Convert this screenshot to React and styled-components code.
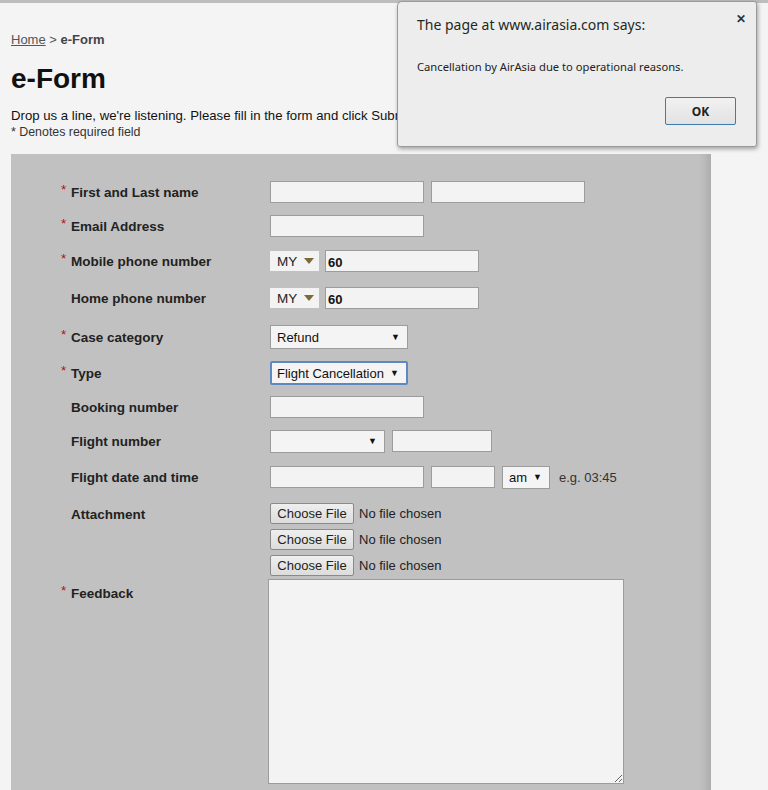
import React from "react";
import styled, { createGlobalStyle } from "styled-components";

const Global = createGlobalStyle`
  html, body {
    margin: 0;
    padding: 0;
    background: #f4f4f4;
    font-family: "Liberation Sans", Arial, sans-serif;
  }
`;

export default function App() {
  return (
    <>
      <Global />
      <Page>
        <TopStrip />
        <Content>
          <Crumbs>
            <a href="#home">Home</a> &gt; <b>e-Form</b>
          </Crumbs>
          <Title>e-Form</Title>
          <Intro>
            Drop us a line, we're listening. Please fill in the form and click
            Submit.
          </Intro>
          <Note>* Denotes required field</Note>
          <Panel>
            <Row h={34}>
              <Label required>First and Last name</Label>
              <Controls>
                <TextInput w={154} />
                <TextInput w={154} />
              </Controls>
            </Row>
            <Row h={34}>
              <Label required>Email Address</Label>
              <Controls>
                <TextInput w={154} />
              </Controls>
            </Row>
            <Row h={36}>
              <Label required>Mobile phone number</Label>
              <Controls>
                <Country>
                  MY <Tri />
                </Country>
                <TextInput w={154} bold defaultValue="60" />
              </Controls>
            </Row>
            <Row h={38}>
              <Label>Home phone number</Label>
              <Controls>
                <Country>
                  MY <Tri />
                </Country>
                <TextInput w={154} bold defaultValue="60" />
              </Controls>
            </Row>
            <Row h={40}>
              <Label required>Case category</Label>
              <Controls>
                <Select w={138}>
                  Refund <Arrow>▼</Arrow>
                </Select>
              </Controls>
            </Row>
            <Row h={32}>
              <Label required>Type</Label>
              <Controls>
                <Select w={138} focused>
                  Flight Cancellation <Arrow>▼</Arrow>
                </Select>
              </Controls>
            </Row>
            <Row h={36}>
              <Label>Booking number</Label>
              <Controls>
                <TextInput w={154} />
              </Controls>
            </Row>
            <Row h={32}>
              <Label>Flight number</Label>
              <Controls>
                <Select w={115} h={23}>
                  <Arrow>▼</Arrow>
                </Select>
                <TextInput w={100} />
              </Controls>
            </Row>
            <Row h={40}>
              <Label>Flight date and time</Label>
              <Controls>
                <TextInput w={154} />
                <TextInput w={64} />
                <Select w={48} h={23}>
                  am <Arrow>▼</Arrow>
                </Select>
                <Hint>e.g. 03:45</Hint>
              </Controls>
            </Row>
            <TopRow>
              <Label top={4}>Attachment</Label>
              <Files>
                {[0, 1, 2].map((i) => (
                  <FileLine key={i}>
                    <FileButton type="button">Choose File</FileButton>
                    <span>No file chosen</span>
                  </FileLine>
                ))}
              </Files>
            </TopRow>
            <FeedbackRow>
              <Label required top={7}>
                Feedback
              </Label>
              <Feedback />
            </FeedbackRow>
          </Panel>
        </Content>

        <Dialog>
          <Close>✕</Close>
          <DialogTitle>The page at www.airasia.com says:</DialogTitle>
          <DialogText>Cancellation by AirAsia due to operational reasons.</DialogText>
          <DialogActions>
            <OkButton type="button">OK</OkButton>
          </DialogActions>
        </Dialog>
      </Page>
    </>
  );
}

function Label({ required, top, children }) {
  return (
    <LabelText top={top}>
      <Star show={required}>*</Star>
      {children}
    </LabelText>
  );
}

const Page = styled.div`
  position: relative;
  min-height: 790px;
  overflow: hidden;
`;

const TopStrip = styled.div`
  height: 3px;
  background: #bdbdbd;
`;

const Content = styled.div`
  padding: 29px 0 0 11px;
`;

const Crumbs = styled.div`
  font-size: 13px;
  color: #555;
  a {
    color: #555;
    text-decoration: underline;
  }
  b {
    color: #444;
  }
`;

const Title = styled.h1`
  margin: 13px 0 0;
  font-size: 28px;
  font-weight: bold;
  color: #111;
  line-height: 38px;
`;

const Intro = styled.div`
  margin-top: 10px;
  font-size: 13.2px;
  color: #111;
  white-space: nowrap;
  line-height: 16px;
`;

const Note = styled.div`
  font-size: 12.4px;
  color: #333;
  line-height: 16px;
`;

const Panel = styled.div`
  margin-top: 14px;
  width: 700px;
  min-height: 640px;
  padding: 21px 0 0 50px;
  box-sizing: border-box;
  background: #c1c1c1;
  box-shadow: inset -12px 0 10px -8px rgba(0, 0, 0, 0.12);
`;

const Row = styled.div`
  display: grid;
  grid-template-columns: 209px 1fr;
  align-items: center;
  height: ${(p) => p.h}px;
`;

const TopRow = styled.div`
  display: grid;
  grid-template-columns: 209px 1fr;
  align-items: start;
  padding-top: 6px;
`;

const FeedbackRow = styled(TopRow)`
  grid-template-columns: 207px 1fr;
  padding-top: 3px;
`;

const LabelText = styled.div`
  font-size: 13.5px;
  font-weight: bold;
  color: #222;
  white-space: nowrap;
  padding-top: ${(p) => p.top || 0}px;
`;

const Star = styled.span`
  display: inline-block;
  width: 10px;
  color: #b21010;
  font-weight: normal;
  position: relative;
  top: -3px;
  visibility: ${(p) => (p.show ? "visible" : "hidden")};
`;

const Controls = styled.div`
  display: flex;
  align-items: center;
  gap: 7px;
`;

const TextInput = styled.input`
  width: ${(p) => p.w}px;
  height: 22px;
  box-sizing: border-box;
  border: 1px solid #9c9c9c;
  background: #f3f3f3;
  font-family: "Liberation Sans", Arial, sans-serif;
  font-size: 13px;
  font-weight: ${(p) => (p.bold ? "bold" : "normal")};
  color: #111;
  padding: 2px 2px 0;
  margin: 0;
  outline: none;
`;

const Country = styled.div`
  width: 49px;
  height: 20px;
  box-sizing: border-box;
  background: #f3f3f3;
  display: flex;
  align-items: center;
  padding-left: 7px;
  gap: 7px;
  font-size: 13.5px;
  color: #222;
  margin-right: -1px;
`;

const Tri = styled.span`
  width: 0;
  height: 0;
  border-left: 5px solid transparent;
  border-right: 5px solid transparent;
  border-top: 6px solid #7c6a36;
`;

const Select = styled.div`
  position: relative;
  width: ${(p) => p.w}px;
  height: ${(p) => p.h || 24}px;
  box-sizing: border-box;
  border: ${(p) => (p.focused ? "2px solid #5f87c2" : "1px solid #9c9c9c")};
  border-radius: ${(p) => (p.focused ? "2px" : "0")};
  background: #f4f4f4;
  display: flex;
  align-items: center;
  padding-left: ${(p) => (p.focused ? "5px" : "6px")};
  font-size: 13px;
  color: #111;
  white-space: nowrap;
`;

const Arrow = styled.span`
  position: absolute;
  right: 7px;
  top: 50%;
  transform: translateY(-50%);
  font-size: 9px;
  color: #111;
`;

const Hint = styled.span`
  font-size: 13px;
  color: #333;
  margin-left: 2px;
`;

const Files = styled.div`
  display: flex;
  flex-direction: column;
  gap: 5px;
`;

const FileLine = styled.div`
  display: flex;
  align-items: center;
  gap: 5px;
  font-size: 13px;
  color: #222;
`;

const FileButton = styled.button`
  width: 84px;
  height: 21px;
  padding: 0;
  border: 1px solid #8a8a8a;
  border-radius: 2px;
  background: linear-gradient(#efefef, #dcdcdc);
  font-family: "Liberation Sans", Arial, sans-serif;
  font-size: 13px;
  color: #222;
`;

const Feedback = styled.textarea`
  width: 356px;
  height: 205px;
  box-sizing: border-box;
  margin: 0;
  border: 1px solid #9c9c9c;
  background: #f3f3f3;
  outline: none;
`;

const Dialog = styled.div`
  position: absolute;
  left: 397px;
  top: 1px;
  width: 360px;
  height: 146px;
  box-sizing: border-box;
  background: #ededed;
  border: 1px solid #9a9a9a;
  border-radius: 5px 3px 3px 3px;
  box-shadow: 1px 2px 4px rgba(0, 0, 0, 0.35);
  font-family: "Noto Sans", "Open Sans", sans-serif;
  padding: 12px 20px 0 19px;
`;

const Close = styled.div`
  position: absolute;
  right: 10px;
  top: 8px;
  font-size: 12px;
  font-weight: bold;
  color: #333;
`;

const DialogTitle = styled.div`
  font-size: 14px;
  color: #1e2a1e;
  line-height: 22px;
`;

const DialogText = styled.div`
  margin-top: 23px;
  font-size: 11.2px;
  color: #222;
  line-height: 16px;
`;

const DialogActions = styled.div`
  display: flex;
  justify-content: flex-end;
  margin-top: 22px;
`;

const OkButton = styled.button`
  width: 71px;
  height: 28px;
  border: 1px solid #3f7cae;
  border-radius: 2px;
  background: linear-gradient(#f1f1f1, #e2e2e2);
  font-family: "Noto Sans", "Open Sans", sans-serif;
  font-size: 12px;
  font-weight: bold;
  color: #222;
`;
